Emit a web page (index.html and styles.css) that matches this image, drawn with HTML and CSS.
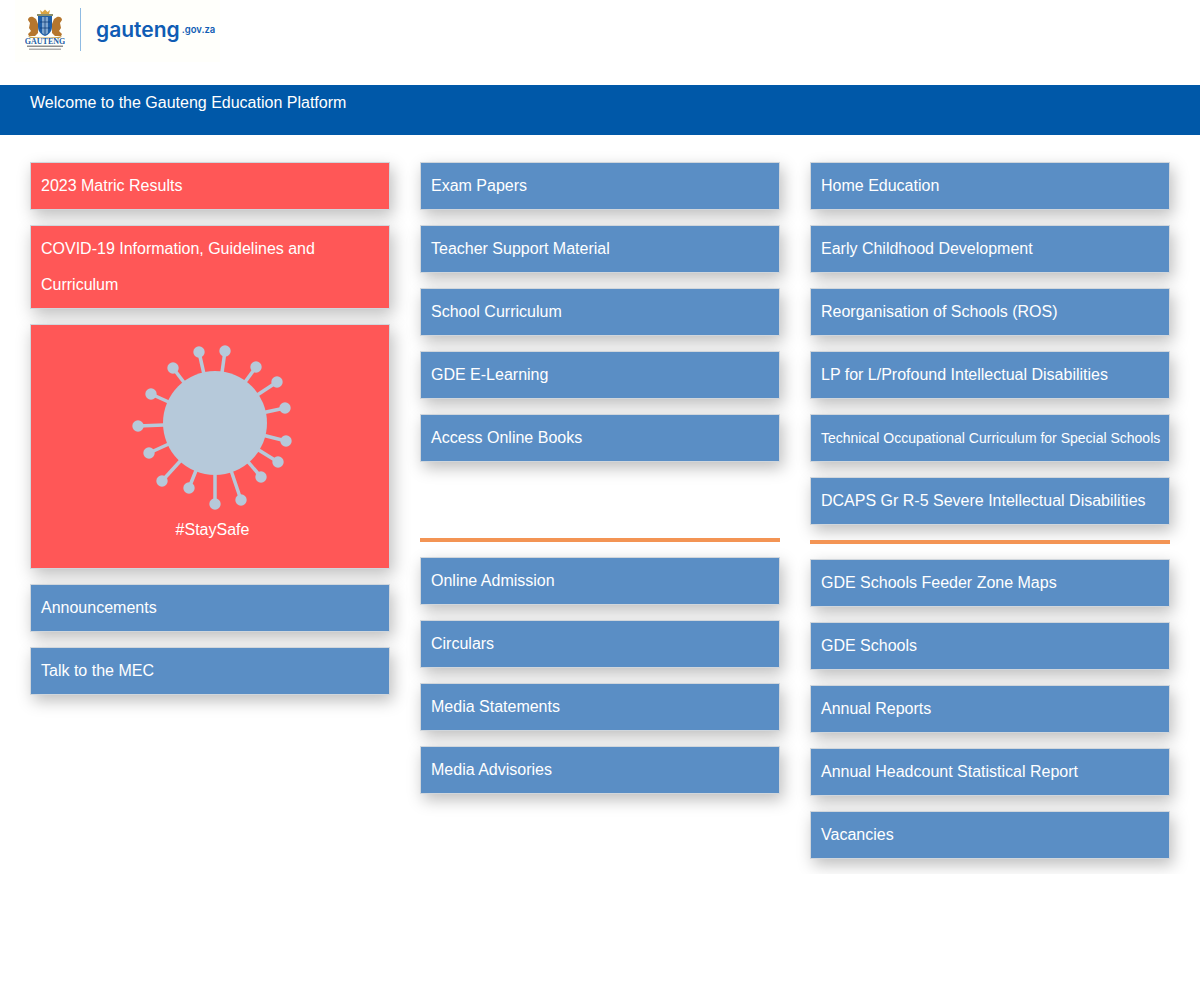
FILE: index.html
```html
<!DOCTYPE html>
<html lang="en">
<head>
<meta charset="utf-8">
<title>Gauteng Education Platform</title>
<link rel="stylesheet" href="styles.css">
</head>
<body>
<header class="top">
  <div class="logo">
    <svg class="crest" viewBox="0 0 40 46" width="40" height="46" aria-hidden="true">
      <path d="M15 3l2.500 2L20 2.500 22.500 5 25 3l-1 4h-8z" fill="#d9a441"/>
      <path d="M12 7h16v2H12z" fill="#8a8f6a"/>
      <path d="M8 10c-3-1-5 1-5 3l2 3-1 5 2 3-3 3 1 2h6l3-3v-9l-2-5z" fill="#b5762d"/>
      <path d="M32 10c3-1 5 1 5 3l-2 3 1 5-2 3 3 3-1 2h-6l-3-3v-9l2-5z" fill="#b5762d"/>
      <path d="M13 9h14v11c0 5-4 8-7 9-3-1-7-4-7-9z" fill="#1f5fa8"/>
      <path d="M17 10h6v16l-3 2-3-2z" fill="#7fa6cf"/>
      <path d="M20 10v18M15 15h10M15 21h10" stroke="#123f78" stroke-width=".8" fill="none"/>
      <path d="M3 29c6 2 28 2 34 0l-2 2H5z" fill="#c9a24a"/>
      <text class="crest-name" x="20" y="37" text-anchor="middle">GAUTENG</text>
      <rect x="2" y="38.500" width="36" height="1.500" fill="#8e8e8e"/>
      <rect x="4" y="41.500" width="32" height="1.500" fill="#b0b0b0"/>
    </svg>
    <span class="logo-rule"></span>
    <span class="wordmark">gauteng</span><span class="domain">.gov.za</span>
  </div>
</header>
<div class="banner">Welcome to the Gauteng Education Platform</div>
<main class="columns">
  <section class="col">
    <a class="tile red">2023 Matric Results</a>
    <a class="tile red">COVID-19 Information, Guidelines and Curriculum</a>
    <a class="tile red safe">
      <svg class="virus" viewBox="0 0 200 200" width="200" height="200" aria-hidden="true">
        <g class="spikes">
          <path d="M105 93L89 22"/><path d="M105 93L115 21"/><path d="M105 93L146 37"/><path d="M105 93L167 52"/>
          <path d="M105 93L175 78"/><path d="M105 93L176 111"/><path d="M105 93L168 132"/><path d="M105 93L151 147"/>
          <path d="M105 93L131 170"/><path d="M105 93L105 174"/><path d="M105 93L79 158"/><path d="M105 93L52 151"/>
          <path d="M105 93L39 123"/><path d="M105 93L28 96"/><path d="M105 93L41 64"/><path d="M105 93L63 38"/>
        </g>
        <g class="knobs">
          <circle cx="89" cy="22" r="5.700"/><circle cx="115" cy="21" r="5.700"/><circle cx="146" cy="37" r="5.700"/><circle cx="167" cy="52" r="5.700"/>
          <circle cx="175" cy="78" r="5.700"/><circle cx="176" cy="111" r="5.700"/><circle cx="168" cy="132" r="5.700"/><circle cx="151" cy="147" r="5.700"/>
          <circle cx="131" cy="170" r="5.700"/><circle cx="105" cy="174" r="5.700"/><circle cx="79" cy="158" r="5.700"/><circle cx="52" cy="151" r="5.700"/>
          <circle cx="39" cy="123" r="5.700"/><circle cx="28" cy="96" r="5.700"/><circle cx="41" cy="64" r="5.700"/><circle cx="63" cy="38" r="5.700"/>
          <circle cx="105" cy="93" r="52"/>
        </g>
      </svg>
      <span class="safe-label">#StaySafe</span>
    </a>
    <a class="tile">Announcements</a>
    <a class="tile">Talk to the MEC</a>
  </section>
  <section class="col">
    <div class="group short">
      <a class="tile">Exam Papers</a>
      <a class="tile">Teacher Support Material</a>
      <a class="tile">School Curriculum</a>
      <a class="tile">GDE E-Learning</a>
      <a class="tile">Access Online Books</a>
    </div>
    <hr class="rule">
    <a class="tile">Online Admission</a>
    <a class="tile">Circulars</a>
    <a class="tile">Media Statements</a>
    <a class="tile">Media Advisories</a>
  </section>
  <section class="col">
    <div class="group tall">
      <a class="tile">Home Education</a>
      <a class="tile">Early Childhood Development</a>
      <a class="tile">Reorganisation of Schools (ROS)</a>
      <a class="tile">LP for L/Profound Intellectual Disabilities</a>
      <a class="tile small">Technical Occupational Curriculum for Special Schools</a>
      <a class="tile">DCAPS Gr R-5 Severe Intellectual Disabilities</a>
    </div>
    <hr class="rule">
    <a class="tile">GDE Schools Feeder Zone Maps</a>
    <a class="tile">GDE Schools</a>
    <a class="tile">Annual Reports</a>
    <a class="tile">Annual Headcount Statistical Report</a>
    <a class="tile">Vacancies</a>
  </section>
</main>
</body>
</html>
```
FILE: styles.css
```css
* { box-sizing: border-box; }
html, body { margin: 0; background: #fff; }
body { font-family: "Liberation Sans", Arial, sans-serif; font-size: 16px; color: #fff; }

.top { height: 85px; padding-left: 15px; }
.logo {
  width: 205px; height: 62px; background: #fffffb;
  display: flex; align-items: flex-start;
}
.crest { margin: 7px 0 0 10px; flex: none; }
.crest-name { font: bold 8px "Liberation Serif", serif; fill: #1f5fa8; }
.logo-rule { width: 1px; height: 43px; margin: 8px 0 0 15px; background: #8fbbe3; flex: none; }
.wordmark {
  margin: 15px 0 0 15px; color: #0f5cb4;
  font: 600 21px/30px Inter, sans-serif;
}
.domain { margin: 20px 0 0 2px; color: #0f5cb4; font: 600 9.500px/20px Inter, sans-serif; }

.banner { height: 50px; padding: 9px 30px 0; background: #0058a8; line-height: 18px; }

.columns {
  display: grid; grid-template-columns: repeat(3, 360px); column-gap: 30px;
  padding: 27px 30px 0; align-items: start;
}
.col, .group { display: flex; flex-direction: column; }
.group { gap: 15px; }
.col > .tile { margin-bottom: 15px; }
.group.short { height: 376px; }
.group.tall { height: 378px; }

.tile {
  display: block; padding: 5px 10px; line-height: 36px;
  background: #5a8ec5; border: 1px solid #d0d6dc;
  box-shadow: 3px 6px 16px rgba(0, 0, 0, .26);
}
.tile.red { background: #ff5757; }
.tile.small { font-size: 14px; white-space: nowrap; }
.tile.safe {
  height: 245px; padding: 5px 0 0; text-align: center;
  display: flex; flex-direction: column; align-items: center;
}
.virus { flex: none; }
.spikes path { stroke: #b6c9da; stroke-width: 3.500; fill: none; }
.knobs circle { fill: #b6c9da; }
.safe-label { margin: -18px 0 0 5px; }

.rule { width: 100%; height: 4px; margin: 0 0 15px; border: 0; background: #f39454; }
```
